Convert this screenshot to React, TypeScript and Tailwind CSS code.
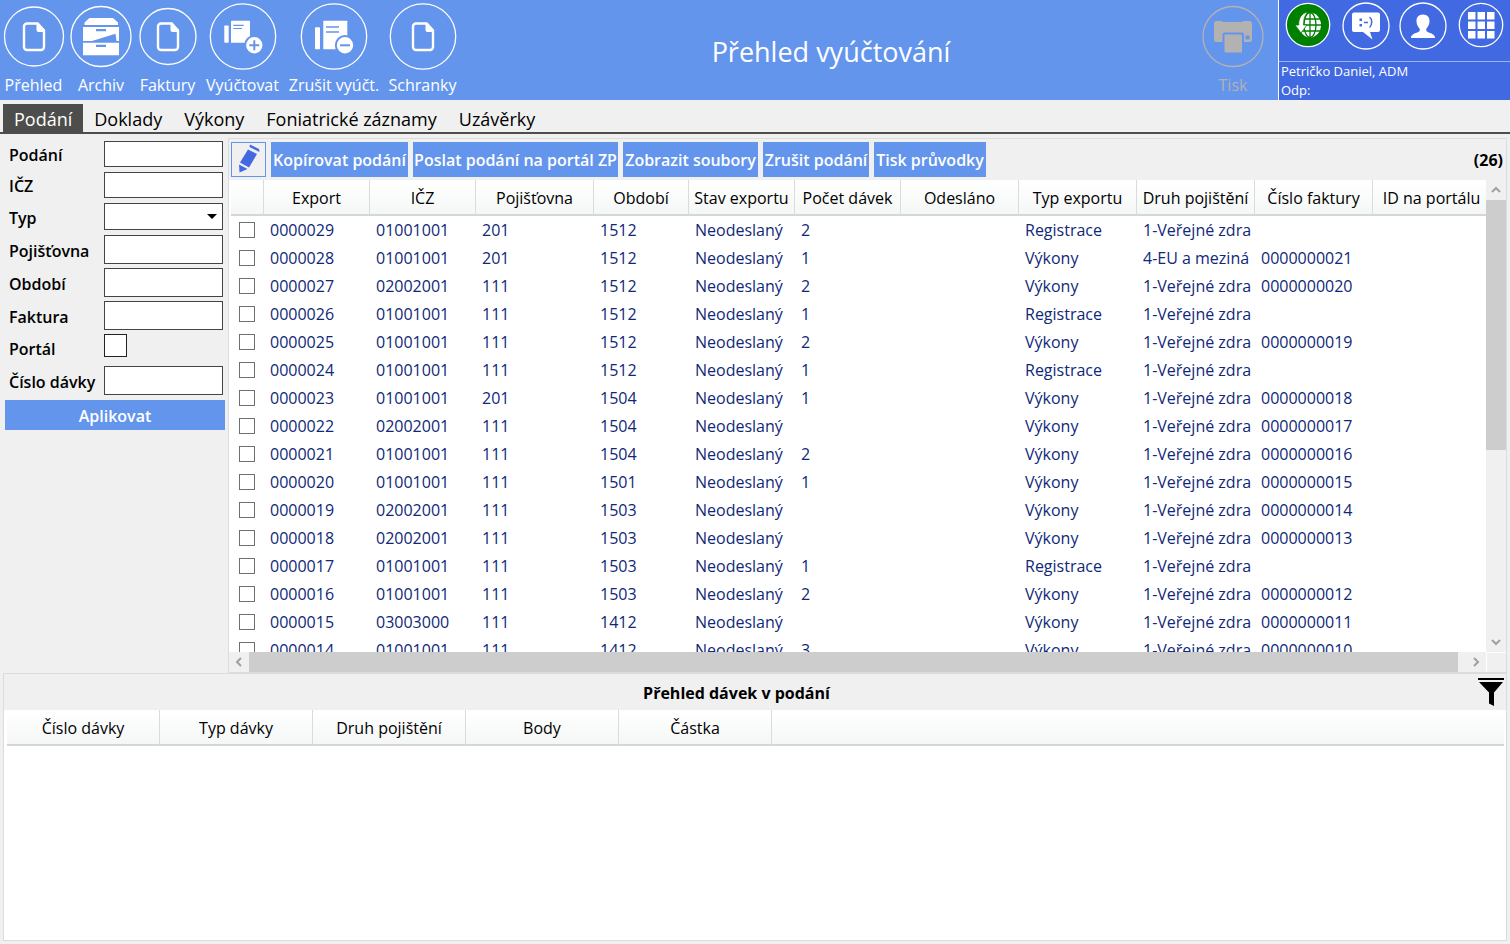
import type { ReactNode } from "react";

const doc = (
  <>
    <path d="M3 -13 H-7 a3 3 0 0 0 -3 3 V10.500 a3 3 0 0 0 3 3 H7 a3 3 0 0 0 3 -3 V-6 Z" fill="none" stroke="currentColor" strokeWidth="2.400" />
    <path d="M2.500 -14 H4.500 L11 -6.500 V-4.500 H4.500 a2 2 0 0 1 -2 -2 Z" fill="currentColor" />
  </>
);

const archive = (
  <g fill="currentColor">
    <path d="M-11.500 -18.500 H12 L17 -14 V-11.500 H-16.500 V-14 Z" />
    <path fillRule="evenodd" d="M-18 -9.500 H18 V4.500 H15.500 L14.500 -2.700 L-9 4.500 H-18 Z M-5 -7.500 V-5.300 H5 V-7.500 Z" />
    <path fillRule="evenodd" d="M-18 6.300 H18 V18.700 H-18 Z M-5 8.300 V10.500 H5 V8.300 Z" />
  </g>
);

const billAdd = (
  <>
    <rect x="-18.700" y="-11" width="4.400" height="17.300" rx="0.800" fill="currentColor" />
    <rect x="-12" y="-15.700" width="19" height="22" rx="0.500" fill="currentColor" />
    <path d="M-9.700 -11.200 H0.700 M-9.700 -8 H-1" stroke="#6495ed" strokeWidth="1.200" />
    <circle cx="11.300" cy="8.700" r="9.200" fill="currentColor" stroke="#6495ed" strokeWidth="2" />
    <path d="M6.300 8.700 H16.300 M11.300 3.700 V13.700" stroke="#6495ed" strokeWidth="2" />
  </>
);

const billRemove = (
  <>
    <rect x="-19" y="-9.300" width="5" height="22" rx="0.800" fill="currentColor" />
    <rect x="-10.700" y="-15.800" width="24" height="28.500" rx="0.500" fill="currentColor" />
    <path d="M-8 -9.500 H5 M-8 -4.500 H5" stroke="#6495ed" strokeWidth="1.600" />
    <circle cx="11" cy="8.800" r="9.200" fill="currentColor" stroke="#6495ed" strokeWidth="2" />
    <path d="M6 8.800 H16" stroke="#6495ed" strokeWidth="2" />
  </>
);

const printer = (
  <>
    <path
      fillRule="evenodd"
      fill="currentColor"
      d="M-16.500 -15.500 H-12 a2 2 0 0 1 2 1 H9 a2 2 0 0 1 2 -1 H16.500 a2.500 2.500 0 0 1 2.500 2.500 V3 a2.500 2.500 0 0 1 -2.500 2.500 H11 V-2 a2 2 0 0 0 -2 -2 H-8.500 a2 2 0 0 0 -2 2 V5.500 H-16.500 a2.500 2.500 0 0 1 -2.500 -2.500 V-13 a2.500 2.500 0 0 1 2.500 -2.500 Z M12.500 -1 V3 H16.500 V-1 Z"
    />
    <rect x="-8.500" y="-2" width="17.500" height="18" rx="1" fill="currentColor" />
  </>
);

const actions = [
  { label: "Přehled", width: "w-[67px]", r: 29.5, icon: doc },
  { label: "Archiv", width: "w-[68px]", r: 30, icon: archive },
  { label: "Faktury", width: "w-[65px]", r: 28, icon: doc },
  { label: "Vyúčtovat", width: "w-[85px]", r: 32.7, icon: billAdd },
  { label: "Zrušit vyúčt.", width: "w-[98px]", r: 32.7, icon: billRemove },
  { label: "Schranky", width: "w-[79px]", r: 32.7, icon: doc },
];

function ActionButton({ label, width, r, icon, disabled }: { label: string; width: string; r: number; icon: ReactNode; disabled?: boolean }) {
  return (
    <button type="button" disabled={disabled} className={`flex shrink-0 flex-col items-center pt-[2px] ${width} ${disabled ? "text-[#b3b1b1]" : "text-white"}`}>
      <svg className="size-[68px] shrink-0" viewBox="-34 -34.5 68 68">
        <circle r={r} fill="none" stroke="currentColor" strokeWidth="1.300" />
        {icon}
      </svg>
      <span className="text-base leading-[30px] whitespace-nowrap">{label}</span>
    </button>
  );
}

const shortcuts = [
  {
    label: "Připojení",
    fill: "#008000",
    r: 21.7,
    cy: -1,
    icon: (
      <>
        <ellipse cx="2" cy="0" rx="11" ry="12.500" fill="#fff" />
        <path d="M2 -13 V13 M-9 0 H13.500 M-7 -6 H12 M-7 6 H12" stroke="#008000" strokeWidth="1.300" />
        <ellipse cx="2" cy="0" rx="6" ry="12.500" fill="none" stroke="#008000" strokeWidth="1.300" />
        <path d="M0 -13 C-7 -12 -9.500 -6 -9.300 0 H-13 L-7 8 L-1 0 H-4.500 C-4.500 -5 -3.500 -10 0 -13 Z" fill="#fff" stroke="#008000" strokeWidth="0.800" />
      </>
    ),
  },
  {
    label: "Zprávy",
    fill: "none",
    r: 23,
    cy: 0,
    icon: (
      <>
        <path d="M-12 -13.500 H12 a2 2 0 0 1 2 2 V4 a2 2 0 0 1 -2 2 H4 L6.500 13.500 L-3 6 H-12 a2 2 0 0 1 -2 -2 V-11.500 a2 2 0 0 1 2 -2 Z" fill="#fff" />
        <path d="M-6.500 -7.500 h2.500 v2.500 h-2.500 Z M-6.500 -2 h2.500 v2.500 h-2.500 Z" fill="#4169e1" />
        <path d="M-2 -3.500 H2 M3.500 -9 C6.500 -7 6.500 -1 3.500 1.500" fill="none" stroke="#4169e1" strokeWidth="1.500" />
      </>
    ),
  },
  {
    label: "Uživatel",
    fill: "none",
    r: 23,
    cy: 0,
    icon: (
      <path d="M0 -11.500 C4.500 -11.500 6.700 -8.500 6.500 -4.500 C6.400 -1.500 5 1 3.300 2.700 V5 C6 7.500 11.500 7 12.200 12 H-12.200 C-11.500 7 -6 7.500 -3.300 5 V2.700 C-5 1 -6.400 -1.500 -6.500 -4.500 C-6.700 -8.500 -4.500 -11.500 0 -11.500 Z" fill="#fff" />
    ),
  },
  {
    label: "Moduly",
    fill: "none",
    r: 21.7,
    cy: -1,
    icon: (
      <g fill="#fff">
        {[-13, -3.5, 6].map((y) => [-13, -3.5, 6].map((x) => <rect key={`${x} ${y}`} x={x} y={y} width="7.500" height="7.500" />))}
      </g>
    ),
  },
];

const tabs = ["Podání", "Doklady", "Výkony", "Foniatrické záznamy", "Uzávěrky"];

const tools = [
  { label: "Kopírovat podání", width: "w-[137px]" },
  { label: "Poslat podání na portál ZP", width: "w-[205px]" },
  { label: "Zobrazit soubory", width: "w-[135px]" },
  { label: "Zrušit podání", width: "w-[106px]" },
  { label: "Tisk průvodky", width: "w-[112px]" },
];

const columns = [
  { label: "Export", width: "w-[106px]" },
  { label: "IČZ", width: "w-[106px]" },
  { label: "Pojišťovna", width: "w-[118px]" },
  { label: "Období", width: "w-[95px]" },
  { label: "Stav exportu", width: "w-[106px]" },
  { label: "Počet dávek", width: "w-[106px]" },
  { label: "Odesláno", width: "w-[118px]" },
  { label: "Typ exportu", width: "w-[118px]" },
  { label: "Druh pojištění", width: "w-[118px]" },
  { label: "Číslo faktury", width: "w-[118px]" },
  { label: "ID na portálu", width: "w-[118px]" },
];

const zdra = "1-Veřejné zdra";
const eu = "4-EU a meziná";

// export, IČZ, pojišťovna, období, počet dávek, typ, druh, faktura
const rows = [
  ["0000029", "01001001", "201", "1512", "2", "Registrace", zdra, ""],
  ["0000028", "01001001", "201", "1512", "1", "Výkony", eu, "0000000021"],
  ["0000027", "02002001", "111", "1512", "2", "Výkony", zdra, "0000000020"],
  ["0000026", "01001001", "111", "1512", "1", "Registrace", zdra, ""],
  ["0000025", "01001001", "111", "1512", "2", "Výkony", zdra, "0000000019"],
  ["0000024", "01001001", "111", "1512", "1", "Registrace", zdra, ""],
  ["0000023", "01001001", "201", "1504", "1", "Výkony", zdra, "0000000018"],
  ["0000022", "02002001", "111", "1504", "", "Výkony", zdra, "0000000017"],
  ["0000021", "01001001", "111", "1504", "2", "Výkony", zdra, "0000000016"],
  ["0000020", "01001001", "111", "1501", "1", "Výkony", zdra, "0000000015"],
  ["0000019", "02002001", "111", "1503", "", "Výkony", zdra, "0000000014"],
  ["0000018", "02002001", "111", "1503", "", "Výkony", zdra, "0000000013"],
  ["0000017", "01001001", "111", "1503", "1", "Registrace", zdra, ""],
  ["0000016", "01001001", "111", "1503", "2", "Výkony", zdra, "0000000012"],
  ["0000015", "03003000", "111", "1412", "", "Výkony", zdra, "0000000011"],
  ["0000014", "01001001", "111", "1412", "3", "Výkony", zdra, "0000000010"],
];

const batchColumns = ["Číslo dávky", "Typ dávky", "Druh pojištění", "Body", "Částka"];

const box = "w-full border border-[#444] bg-white px-1 text-base";

function Field({ id, label, height, children }: { id: string; label: string; height: string; children?: ReactNode }) {
  return (
    <div className={`flex items-center ${height}`}>
      <label htmlFor={id} className="w-[95px] shrink-0 pt-[2px] text-base leading-6 font-semibold whitespace-nowrap">
        {label}
      </label>
      {children ?? <input id={id} type="text" className={`${box} h-full min-w-0`} />}
    </div>
  );
}

function FilterForm() {
  return (
    <form className="flex w-[228px] shrink-0 flex-col pt-[3px] pr-[3px] pl-[5px]" onSubmit={(e) => e.preventDefault()}>
      <div className="flex flex-col gap-[5px] pr-[2px] pl-1">
        <Field id="podani" label="Podání" height="h-[26px]" />
        <Field id="icz" label="IČZ" height="h-[26px]" />
        <Field id="typ" label="Typ" height="h-[27px]">
          <div className="relative h-full min-w-0 flex-1">
            <select id="typ" className={`${box} h-full appearance-none`}>
              <option value="" />
            </select>
            <svg className="pointer-events-none absolute top-[11px] right-[6px] h-[5px] w-[10px]" viewBox="0 0 10 5">
              <path d="M0 0 H10 L5 5 Z" fill="#000" />
            </svg>
          </div>
        </Field>
      </div>
      <div className="mt-[5px] flex flex-col gap-1 pr-[2px] pl-1">
        <Field id="pojistovna" label="Pojišťovna" height="h-[29px]" />
        <Field id="obdobi" label="Období" height="h-[29px]" />
        <Field id="faktura" label="Faktura" height="h-[29px]" />
        <Field id="portal" label="Portál" height="h-[28px]">
          <input id="portal" type="checkbox" className="size-[23px] shrink-0 appearance-none self-start border border-[#222] bg-white checked:bg-[#4169e1]" />
        </Field>
        <Field id="cislo" label="Číslo dávky" height="h-[29px]" />
      </div>
      <button type="submit" className="mt-[5px] h-[30px] bg-[#6495ed] pt-[2px] text-base font-semibold text-white">
        Aplikovat
      </button>
    </form>
  );
}

function Arrow({ d, label, className }: { d: string; label: string; className: string }) {
  return (
    <button type="button" aria-label={label} className={`flex shrink-0 items-center justify-center ${className}`}>
      <svg className="size-[10px]" viewBox="0 0 10 10">
        <path d={d} fill="none" stroke="#a0a0a0" strokeWidth="2" />
      </svg>
    </button>
  );
}

const th = "border-r border-b-2 border-[#d9dcdc] border-b-[#d5d7d7] bg-linear-to-b from-white to-[#f5f7f7] p-0 pt-[2px] font-normal";

function SubmissionsTable() {
  return (
    <div className="min-h-0 min-w-0 flex-1 overflow-hidden bg-white pl-[2px]">
      <table className="w-[1260px] table-fixed border-separate border-spacing-0 text-base leading-6">
        <thead>
          <tr className="h-9">
            <th className={`${th} w-[33px]`} />
            {columns.map((c) => (
              <th key={c.label} scope="col" className={`${th} ${c.width}`}>
                <div className="mx-[5px] overflow-hidden whitespace-nowrap">{c.label}</div>
              </th>
            ))}
          </tr>
        </thead>
        <tbody className="text-[#0f2878]">
          {rows.map(([exp, icz, poj, obd, pocet, typ, druh, faktura]) => (
            <tr key={exp} className="h-7">
              <td className="p-0">
                <input type="checkbox" aria-label={`Vybrat ${exp}`} className="ml-2 block size-4 appearance-none border border-[#707070] bg-white checked:bg-[#4169e1]" />
              </td>
              {[exp, icz, poj, obd, "Neodeslaný", pocet, "", typ, druh, faktura, ""].map((value, i) => (
                <td key={i} className="p-0 pl-[6px] whitespace-nowrap">
                  {value}
                </td>
              ))}
            </tr>
          ))}
        </tbody>
      </table>
    </div>
  );
}

function Submissions() {
  return (
    <section className="mr-[3px] flex min-w-0 flex-1 flex-col border border-[#dcdcdc]">
      <div className="flex h-[41px] shrink-0 items-center gap-[5px] pr-[3px] pb-[1px] pl-[2px]">
        <button type="button" aria-label="Upravit" className="flex size-[35px] shrink-0 items-center justify-center border border-[#6495ed]">
          <svg className="size-8" viewBox="0 0 32 32" fill="#4169e1">
            <path d="M17 1.500 L26 6 L26.500 9 L16.500 4 Z" />
            <path d="M15 6.500 L24 11 L16 24.500 L7 19.500 Z" />
            <path d="M6 21.500 L14.500 26 L6.500 29.500 Z" />
          </svg>
        </button>
        {tools.map((t) => (
          <button key={t.label} type="button" className={`flex h-[35px] shrink-0 items-center justify-center bg-[#6495ed] pt-[2px] text-base font-semibold whitespace-nowrap text-white ${t.width}`}>
            {t.label}
          </button>
        ))}
        <span className="ml-auto pt-[2px] text-base font-bold">(26)</span>
      </div>
      <div className="flex min-h-0 flex-1">
        <SubmissionsTable />
        <div className="flex w-5 shrink-0 flex-col">
          <Arrow d="M1 7 L5 3 L9 7" label="Nahoru" className="h-5" />
          <div className="h-[250px] bg-[#cdcdcd]" />
          <Arrow d="M1 3 L5 7 L9 3" label="Dolů" className="mt-auto h-5" />
        </div>
      </div>
      <div className="flex h-5 shrink-0">
        <Arrow d="M7 1 L3 5 L7 9" label="Vlevo" className="w-5" />
        <div className="flex-1 bg-[#cdcdcd]" />
        <Arrow d="M3 1 L7 5 L3 9" label="Vpravo" className="ml-2 w-5" />
        <div className="w-5 border-t border-l border-white" />
      </div>
    </section>
  );
}

function Batches() {
  return (
    <section className="mx-[3px] flex min-h-0 flex-col border border-[#dcdcdc] bg-white">
      <div className="flex h-9 shrink-0 items-center bg-[#f0f0f0]">
        <h2 className="flex-1 pt-[2px] pr-2 text-center text-base font-bold">Přehled dávek v podání</h2>
        <button type="button" aria-label="Filtr" className="mr-[2px] flex w-[27px] justify-center">
          <svg className="h-7 w-[26px]" viewBox="0 0 26 28">
            <path d="M0 0 H26 V2 H0 Z M1 4 H25 L16 14.500 V28 L11 25.500 V14.500 Z" fill="#000" />
          </svg>
        </button>
      </div>
      <div className="pr-[2px] pl-[3px]">
        <table className="w-full table-fixed border-separate border-spacing-0 text-base leading-6">
          <thead>
            <tr className="h-9">
              {batchColumns.map((c) => (
                <th key={c} scope="col" className={`${th} w-[153px]`}>
                  {c}
                </th>
              ))}
              <th className={`${th} border-r-0`} />
            </tr>
          </thead>
        </table>
      </div>
    </section>
  );
}

export default function App() {
  return (
    <div className="flex h-screen flex-col overflow-hidden bg-[#f0f0f0] font-['Open_Sans','Noto_Sans',sans-serif] text-black">
      <header className="flex h-[100px] shrink-0 bg-[#6495ed] text-white">
        {actions.map((a) => (
          <ActionButton key={a.label} {...a} />
        ))}
        <h1 className="flex-1 pt-[34px] text-center text-[27px] leading-9 whitespace-nowrap">Přehled vyúčtování</h1>
        <div className="mr-3 flex">
          <ActionButton label="Tisk" width="w-[66px]" r={30} icon={printer} disabled />
        </div>
        <div className="flex w-[232px] shrink-0 flex-col border-l border-white bg-[#4169e1]">
          <div className="flex h-[62px] items-start border-b border-[#9db3f0]">
            {shortcuts.map((s) => (
              <button key={s.label} type="button" aria-label={s.label} className="flex flex-1 justify-center">
                <svg className="size-[52px]" viewBox="-26 -26 52 52">
                  <g transform={`translate(0 ${s.cy})`}>
                    <circle r={s.r} fill={s.fill} stroke="#fff" strokeWidth="1.300" />
                    {s.icon}
                  </g>
                </svg>
              </button>
            ))}
          </div>
          <p className="pl-[2px] text-[13px] leading-[19px]">Petričko Daniel, ADM</p>
          <p className="pl-[2px] text-[13px] leading-[19px]">Odp:</p>
        </div>
      </header>

      <nav className="flex shrink-0 border-b-2 border-[#4d4d4b] pt-1 pl-[3px] text-lg leading-7">
        {tabs.map((tab, i) => (
          <button key={tab} type="button" className={`h-7 px-[11px] pt-[1px] whitespace-nowrap ${i === 0 ? "bg-[#4d4d4b] text-white" : ""}`}>
            {tab}
          </button>
        ))}
      </nav>

      <main className="grid min-h-0 flex-1 grid-cols-[minmax(0,1fr)] grid-rows-[minmax(0,2fr)_minmax(0,1fr)] pt-1 pb-[3px]">
        <div className="flex min-h-0">
          <FilterForm />
          <Submissions />
        </div>
        <Batches />
      </main>
    </div>
  );
}
